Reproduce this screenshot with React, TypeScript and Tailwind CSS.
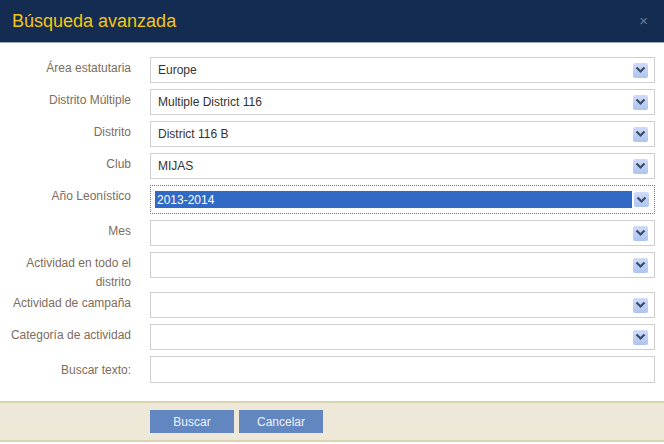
import React from 'react';

const Chevron = () => (
  <span className="flex h-[15px] w-[15px] items-center justify-center rounded-[2px] bg-gradient-to-b from-[#cfdcf7] to-[#aec4f0]">
    <svg width="11" height="8" viewBox="0 0 11 8">
      <path d="M1.5 1.5 L5.5 5.5 L9.5 1.5" fill="none" stroke="#3b4a68" strokeWidth="2.2" />
    </svg>
  </span>
);

const fields = [
  { label: 'Área estatutaria', value: 'Europe' },
  { label: 'Distrito Múltiple', value: 'Multiple District 116' },
  { label: 'Distrito', value: 'District 116 B' },
  { label: 'Club', value: 'MIJAS' },
  { label: 'Año Leonístico', value: '2013-2014', focus: true },
  { label: 'Mes', value: '' },
  { label: 'Actividad en todo el distrito', value: '', tall: true },
  { label: 'Actividad de campaña', value: '' },
  { label: 'Categoría de actividad', value: '' },
];

export default function App() {
  return (
    <div className="h-[444px] w-[664px] bg-white" style={{ fontFamily: '"Liberation Sans", Arial, sans-serif' }}>
      <div className="flex h-[43px] items-center justify-between border-b border-[#9aa6bc] bg-[#152c52] pl-3 pr-4">
        <h1 className="text-[18px] text-[#f3c613]">Búsqueda avanzada</h1>
        <span className="text-[15px] text-[#6a7a97]">×</span>
      </div>

      <div className="flex flex-col gap-[6px] pt-[14px]">
        {fields.map((f) => (
          <div key={f.label} className={`flex items-start ${f.tall ? 'h-[34px]' : ''}`}>
            <label className="w-[131px] shrink-0 pl-2 pt-[2px] text-right text-[12px] leading-[19px] text-[#7d6d5c]">
              {f.label}
            </label>
            {f.focus ? (
              <div className="ml-[19px] flex h-[29px] w-[505px] items-center border border-dotted border-[#777] pl-[4px] pr-[5px]">
                <div className="flex h-[17px] flex-1 items-center bg-[#316ac5] pl-[2px] text-[12px] text-white">{f.value}</div>
                <div className="ml-[2px]">
                  <Chevron />
                </div>
              </div>
            ) : (
              <div className="ml-[19px] flex h-[26px] w-[505px] items-center justify-between border border-[#cfcfcf] pl-[7px] pr-[6px] text-[12px] text-[#333]">
                <span>{f.value}</span>
                <Chevron />
              </div>
            )}
          </div>
        ))}
        <div className="flex items-start">
          <label className="w-[131px] shrink-0 pl-2 pt-[5px] text-right text-[12px] leading-[19px] text-[#7d6d5c]">
            Buscar texto:
          </label>
          <input className="ml-[19px] h-[27px] w-[505px] border border-[#cfcfcf] px-[7px] text-[12px] outline-none" />
        </div>
      </div>

      <div className="mt-[18px] flex h-[41px] items-center gap-[5px] border-y-2 border-[#d9d3b2] bg-[#ede8d8] pl-[150px]">
        <button className="h-[23px] w-[84px] bg-[#6286c0] text-[12px] text-[#eef2fa]">Buscar</button>
        <button className="h-[23px] w-[84px] bg-[#6286c0] text-[12px] text-[#eef2fa]">Cancelar</button>
      </div>
    </div>
  );
}
